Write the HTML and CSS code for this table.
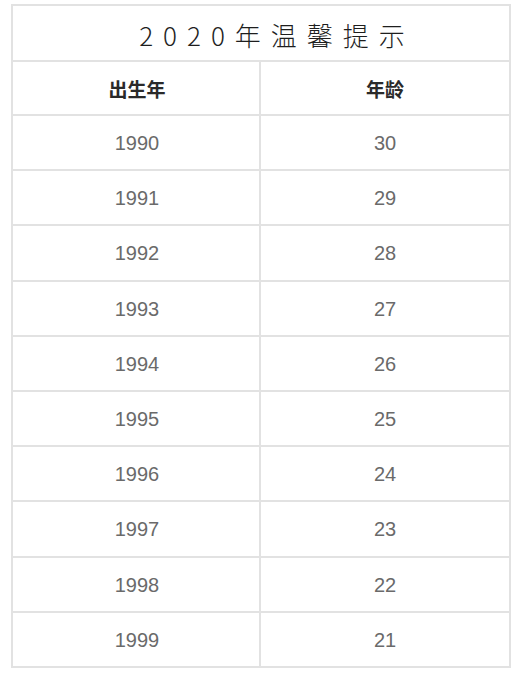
FILE: index.html
```html
<!DOCTYPE html>
<html lang="zh-CN">
<head>
<meta charset="utf-8">
<title>2020年温馨提示</title>
<link rel="stylesheet" href="styles.css">
</head>
<body>
<div class="sheet">
  <div class="title">2020年温馨提示</div>
  <div class="row head"><div class="cell">出生年</div><div class="cell">年龄</div></div>
  <div class="row"><div class="cell">1990</div><div class="cell">30</div></div>
  <div class="row"><div class="cell">1991</div><div class="cell">29</div></div>
  <div class="row"><div class="cell">1992</div><div class="cell">28</div></div>
  <div class="row"><div class="cell">1993</div><div class="cell">27</div></div>
  <div class="row"><div class="cell">1994</div><div class="cell">26</div></div>
  <div class="row"><div class="cell">1995</div><div class="cell">25</div></div>
  <div class="row"><div class="cell">1996</div><div class="cell">24</div></div>
  <div class="row"><div class="cell">1997</div><div class="cell">23</div></div>
  <div class="row"><div class="cell">1998</div><div class="cell">22</div></div>
  <div class="row"><div class="cell">1999</div><div class="cell">21</div></div>
</div>
</body>
</html>
```
FILE: styles.css
```css
html, body {
  margin: 0;
  padding: 0;
  background: #ffffff;
}
body {
  padding: 4px 0 0 11px;
  font-family: "Liberation Sans", "Noto Sans CJK SC", sans-serif;
}
.sheet {
  width: 500px;
  box-sizing: border-box;
  border: 2px solid #e2e2e2;
}
.title {
  height: 56px;
  box-sizing: border-box;
  border-bottom: 2px solid #e2e2e2;
  display: flex;
  align-items: center;
  justify-content: center;
  font-family: "Noto Sans CJK SC", sans-serif;
  font-weight: 300;
  font-size: 26px;
  letter-spacing: 10px;
  padding-left: 32px;
  padding-top: 2px;
  color: #1e1e1e;
}
.row {
  display: grid;
  grid-template-columns: 1fr 1fr;
  height: 55.2px;
  box-sizing: border-box;
  border-bottom: 2px solid #e2e2e2;
  color: #6a6a6a;
  font-size: 20px;
}
.row:last-child {
  border-bottom: none;
  height: 53.2px;
}
.row.head {
  height: 54px;
  color: #2a2a2a;
  font-family: "Noto Sans CJK SC", sans-serif;
  font-weight: 700;
  font-size: 19px;
}
.cell {
  display: flex;
  align-items: center;
  justify-content: center;
  padding-top: 2px;
}
.head .cell {
  padding-top: 0;
}
.cell:first-child {
  border-right: 2px solid #e2e2e2;
  padding-left: 2px;
}
```
